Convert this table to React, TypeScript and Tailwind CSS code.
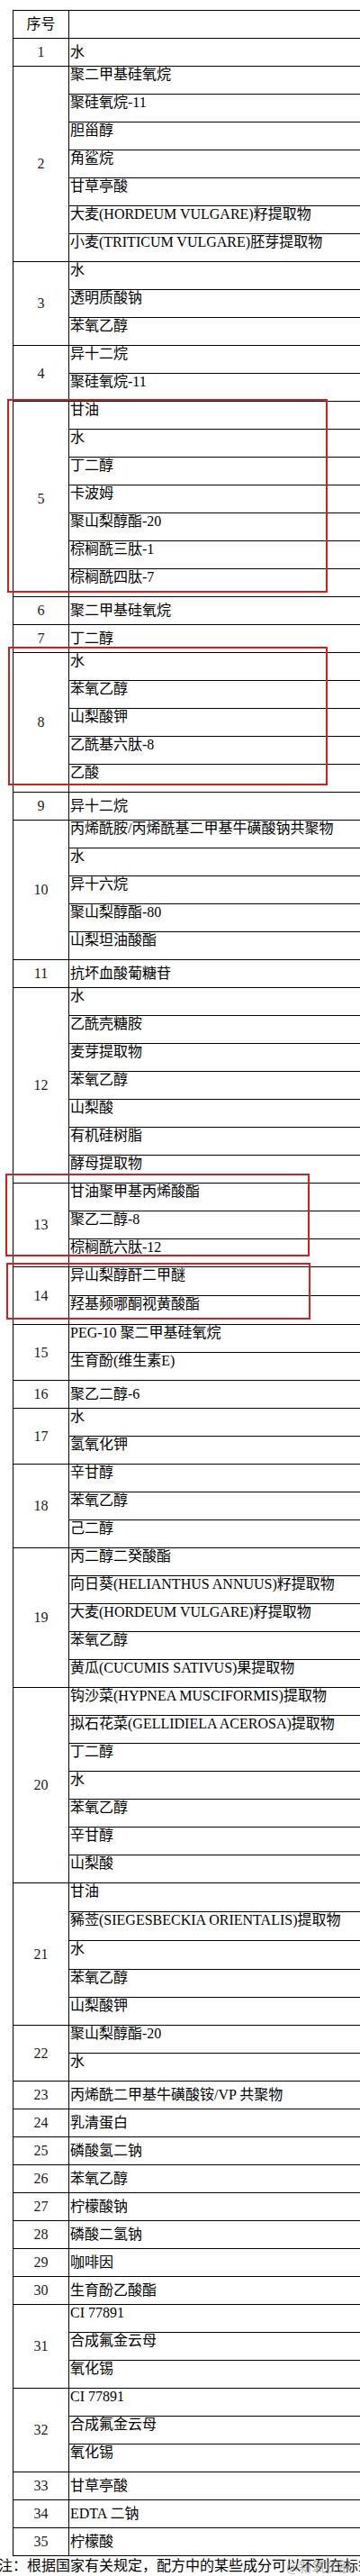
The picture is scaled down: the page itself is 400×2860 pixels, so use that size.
const rows: [string, string[]][] = [
  ["1", ["水"]],
  ["2", ["聚二甲基硅氧烷", "聚硅氧烷-11", "胆甾醇", "角鲨烷", "甘草亭酸", "大麦(HORDEUM VULGARE)籽提取物", "小麦(TRITICUM VULGARE)胚芽提取物"]],
  ["3", ["水", "透明质酸钠", "苯氧乙醇"]],
  ["4", ["异十二烷", "聚硅氧烷-11"]],
  ["5", ["甘油", "水", "丁二醇", "卡波姆", "聚山梨醇酯-20", "棕榈酰三肽-1", "棕榈酰四肽-7"]],
  ["6", ["聚二甲基硅氧烷"]],
  ["7", ["丁二醇"]],
  ["8", ["水", "苯氧乙醇", "山梨酸钾", "乙酰基六肽-8", "乙酸"]],
  ["9", ["异十二烷"]],
  ["10", ["丙烯酰胺/丙烯酰基二甲基牛磺酸钠共聚物", "水", "异十六烷", "聚山梨醇酯-80", "山梨坦油酸酯"]],
  ["11", ["抗坏血酸葡糖苷"]],
  ["12", ["水", "乙酰壳糖胺", "麦芽提取物", "苯氧乙醇", "山梨酸", "有机硅树脂", "酵母提取物"]],
  ["13", ["甘油聚甲基丙烯酸酯", "聚乙二醇-8", "棕榈酰六肽-12"]],
  ["14", ["异山梨醇酐二甲醚", "羟基频哪酮视黄酸酯"]],
  ["15", ["PEG-10 聚二甲基硅氧烷", "生育酚(维生素E)"]],
  ["16", ["聚乙二醇-6"]],
  ["17", ["水", "氢氧化钾"]],
  ["18", ["辛甘醇", "苯氧乙醇", "己二醇"]],
  ["19", ["丙二醇二癸酸酯", "向日葵(HELIANTHUS ANNUUS)籽提取物", "大麦(HORDEUM VULGARE)籽提取物", "苯氧乙醇", "黄瓜(CUCUMIS SATIVUS)果提取物"]],
  ["20", ["钩沙菜(HYPNEA MUSCIFORMIS)提取物", "拟石花菜(GELLIDIELA ACEROSA)提取物", "丁二醇", "水", "苯氧乙醇", "辛甘醇", "山梨酸"]],
  ["21", ["甘油", "豨莶(SIEGESBECKIA ORIENTALIS)提取物", "水", "苯氧乙醇", "山梨酸钾"]],
  ["22", ["聚山梨醇酯-20", "水"]],
  ["23", ["丙烯酰二甲基牛磺酸铵/VP 共聚物"]],
  ["24", ["乳清蛋白"]],
  ["25", ["磷酸氢二钠"]],
  ["26", ["苯氧乙醇"]],
  ["27", ["柠檬酸钠"]],
  ["28", ["磷酸二氢钠"]],
  ["29", ["咖啡因"]],
  ["30", ["生育酚乙酸酯"]],
  ["31", ["CI 77891", "合成氟金云母", "氧化锡"]],
  ["32", ["CI 77891", "合成氟金云母", "氧化锡"]],
  ["33", ["甘草亭酸"]],
  ["34", ["EDTA 二钠"]],
  ["35", ["柠檬酸"]],
];

// a few rows in the scan are one pixel taller
const tall = new Set(["14-0", "14-1", "21-0", "21-1", "21-2"]);

const font = { fontFamily: '"Liberation Serif", "Noto Sans CJK SC", serif' };

const Group = ({ num, items }: { num: string; items: string[] }) => {
  const single = items.length === 1;
  return (
    <div className="flex">
      <div className="w-[62px] shrink-0 border-r border-b border-black flex items-center justify-center text-[16px] text-[#1a1a1a]">
        {num}
      </div>
      <div className="flex-1 flex flex-col">
        {items.map((t, i) => (
          <div
            key={i}
            className={`${tall.has(`${num}-${i}`) ? "h-[32px]" : "h-[31px]"} border-b border-black pl-[1px] text-[16px] leading-[18px] whitespace-nowrap flex ${single ? "items-center" : "items-start"}`}
          >
            {t}
          </div>
        ))}
      </div>
    </div>
  );
};

const Box = ({ cls }: { cls: string }) => (
  <div className={`absolute border-2 border-[#d11f1f] pointer-events-none ${cls}`} />
);

export default function App() {
  return (
    <div className="relative w-[400px] h-[2860px] bg-white overflow-hidden text-black" style={font}>
      <div className="pt-[11px] pl-[14px]">
        <div className="w-[520px] border-l border-t border-black">
          <div className="flex">
            <div className="w-[62px] h-[31px] shrink-0 border-r border-b border-black flex items-center justify-center text-[16px]">
              序号
            </div>
            <div className="flex-1 h-[31px] border-b border-black" />
          </div>
          {rows.map(([n, items]) => (
            <Group key={n} num={n} items={items} />
          ))}
        </div>
      </div>
      <div className="ml-[-2px] pt-[2px] text-[16px] leading-[18px] whitespace-nowrap">
        注：根据国家有关规定，配方中的某些成分可以不列在标签上
      </div>
      <div className="absolute left-[318px] top-[2841px] text-[15px] leading-[18px] text-[#9a9a9a] opacity-80 whitespace-nowrap">
        @新氧护肤
      </div>

      <Box cls="left-[8px] top-[443px] w-[356px] h-[215px]" />
      <Box cls="left-[9px] top-[718px] w-[355px] h-[154px]" />
      <Box cls="left-[6px] top-[1303px] w-[338px] h-[92px]" />
      <Box cls="left-[7px] top-[1402px] w-[338px] h-[63px]" />
    </div>
  );
}
